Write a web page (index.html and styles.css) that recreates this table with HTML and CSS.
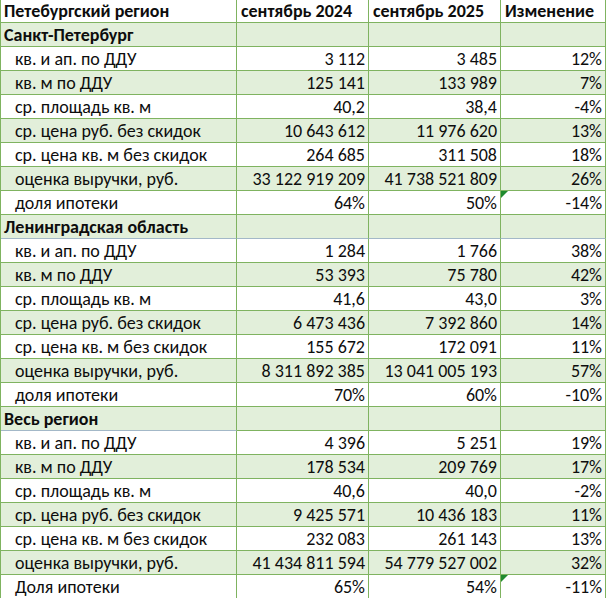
FILE: index.html
```html
<!DOCTYPE html>
<html lang="ru">
<head>
<meta charset="utf-8">
<title>Петебургский регион</title>
<link rel="stylesheet" href="styles.css">
</head>
<body>
<div class="sheet">
  <div class="row head">
    <div class="c lbl b">Петебургский регион</div>
    <div class="c b">сентябрь 2024</div>
    <div class="c b">сентябрь 2025</div>
    <div class="c b">Изменение</div>
  </div>

  <div class="row g">
    <div class="c lbl b">Санкт-Петербург</div><div class="c"></div><div class="c"></div><div class="c"></div>
  </div>
  <div class="row">
    <div class="c lbl ind">кв. и ап. по ДДУ</div><div class="c n">3 112</div><div class="c n">3 485</div><div class="c n">12%</div>
  </div>
  <div class="row g">
    <div class="c lbl ind">кв. м по ДДУ</div><div class="c n">125 141</div><div class="c n">133 989</div><div class="c n">7%</div>
  </div>
  <div class="row">
    <div class="c lbl ind">ср. площадь кв. м</div><div class="c n">40,2</div><div class="c n">38,4</div><div class="c n">-4%</div>
  </div>
  <div class="row g">
    <div class="c lbl ind">ср. цена руб. без скидок</div><div class="c n">10 643 612</div><div class="c n">11 976 620</div><div class="c n">13%</div>
  </div>
  <div class="row">
    <div class="c lbl ind">ср. цена кв. м без скидок</div><div class="c n">264 685</div><div class="c n">311 508</div><div class="c n">18%</div>
  </div>
  <div class="row g">
    <div class="c lbl ind">оценка выручки, руб.</div><div class="c n">33 122 919 209</div><div class="c n">41 738 521 809</div><div class="c n">26%</div>
  </div>
  <div class="row">
    <div class="c lbl ind">доля ипотеки</div><div class="c n">64%</div><div class="c n">50%</div><div class="c n flag">-14%</div>
  </div>

  <div class="row g">
    <div class="c lbl b blue">Ленинградская область</div><div class="c blue"></div><div class="c blue"></div><div class="c blue"></div>
  </div>
  <div class="row">
    <div class="c lbl ind">кв. и ап. по ДДУ</div><div class="c n">1 284</div><div class="c n">1 766</div><div class="c n">38%</div>
  </div>
  <div class="row g">
    <div class="c lbl ind">кв. м по ДДУ</div><div class="c n">53 393</div><div class="c n">75 780</div><div class="c n">42%</div>
  </div>
  <div class="row">
    <div class="c lbl ind">ср. площадь кв. м</div><div class="c n">41,6</div><div class="c n">43,0</div><div class="c n">3%</div>
  </div>
  <div class="row g">
    <div class="c lbl ind">ср. цена руб. без скидок</div><div class="c n">6 473 436</div><div class="c n">7 392 860</div><div class="c n">14%</div>
  </div>
  <div class="row">
    <div class="c lbl ind">ср. цена кв. м без скидок</div><div class="c n">155 672</div><div class="c n">172 091</div><div class="c n">11%</div>
  </div>
  <div class="row g">
    <div class="c lbl ind">оценка выручки, руб.</div><div class="c n">8 311 892 385</div><div class="c n">13 041 005 193</div><div class="c n">57%</div>
  </div>
  <div class="row">
    <div class="c lbl ind">доля ипотеки</div><div class="c n">70%</div><div class="c n">60%</div><div class="c n">-10%</div>
  </div>

  <div class="row g">
    <div class="c lbl b blue">Весь регион</div><div class="c"></div><div class="c"></div><div class="c"></div>
  </div>
  <div class="row">
    <div class="c lbl ind">кв. и ап. по ДДУ</div><div class="c n">4 396</div><div class="c n">5 251</div><div class="c n">19%</div>
  </div>
  <div class="row g">
    <div class="c lbl ind">кв. м по ДДУ</div><div class="c n">178 534</div><div class="c n">209 769</div><div class="c n">17%</div>
  </div>
  <div class="row">
    <div class="c lbl ind">ср. площадь кв. м</div><div class="c n">40,6</div><div class="c n">40,0</div><div class="c n">-2%</div>
  </div>
  <div class="row g">
    <div class="c lbl ind">ср. цена руб. без скидок</div><div class="c n">9 425 571</div><div class="c n">10 436 183</div><div class="c n">11%</div>
  </div>
  <div class="row">
    <div class="c lbl ind">ср. цена кв. м без скидок</div><div class="c n">232 083</div><div class="c n">261 143</div><div class="c n">13%</div>
  </div>
  <div class="row g">
    <div class="c lbl ind">оценка выручки, руб.</div><div class="c n">41 434 811 594</div><div class="c n">54 779 527 002</div><div class="c n">32%</div>
  </div>
  <div class="row">
    <div class="c lbl ind">Доля ипотеки</div><div class="c n">65%</div><div class="c n">54%</div><div class="c n flag">-11%</div>
  </div>
</div>
</body>
</html>
```
FILE: styles.css
```css
* { box-sizing: border-box; }

html, body {
  margin: 0;
  padding: 0;
  background: #ffffff;
}

body {
  font-family: "Carlito", "Calibri", "Lato", sans-serif;
  font-size: 18px;
  color: #0d0d0d;
}

.sheet {
  width: 606px;
  display: flex;
  flex-direction: column;
  border-left: 1px solid #7fb360;
}

.row {
  display: grid;
  grid-template-columns: 236px 132px 132px 105px;
  height: 24px;
  background: #ffffff;
}

.row.head {
  height: 23px;
}

.row.g {
  background: #e2efda;
}

.c {
  display: flex;
  align-items: flex-end;
  justify-content: flex-start;
  padding: 0 3px 0 4px;
  border-right: 1px solid #7fb360;
  border-bottom: 1px solid #7fb360;
  white-space: nowrap;
  overflow: hidden;
  line-height: normal;
  position: relative;
}

.c.blue {
  border-bottom-color: #a3b8c8;
}

.c.lbl {
  padding-left: 3px;
}

.c.ind {
  padding-left: 14px;
}

.c.b {
  font-weight: bold;
}

.c.n {
  justify-content: flex-end;
}

.c.flag::before {
  content: "";
  position: absolute;
  left: 0;
  top: 0;
  width: 0;
  height: 0;
  border-top: 7px solid #1f8a2e;
  border-right: 7px solid transparent;
}
```
